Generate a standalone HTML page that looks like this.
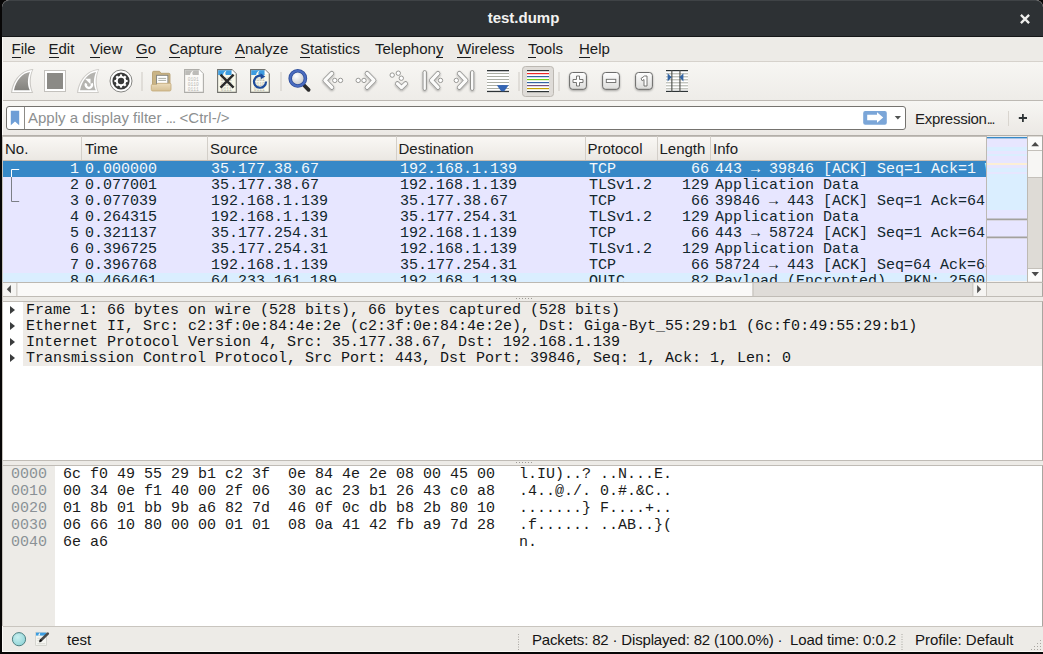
<!DOCTYPE html>
<html><head><meta charset="utf-8">
<style>
*{box-sizing:border-box;margin:0;padding:0}
html,body{width:1043px;height:654px;overflow:hidden;background:#070606;font-family:"Liberation Sans",sans-serif}
.a{position:absolute}
#win{position:absolute;left:2px;top:0;width:1041px;height:652px;background:#edebe7;overflow:hidden;border-radius:7px 7px 0 0}
#title{position:absolute;left:0;top:0;width:1041px;height:37px;background:#2d3134;border-radius:7px 7px 0 0;border-top:1px solid #3f4346;border-bottom:1px solid #151718}
#title .t{position:absolute;left:1px;width:1041px;top:8px;text-align:center;color:#f2f2f0;font-weight:bold;font-size:15px}
#title .x{position:absolute;left:1014px;top:10px}
#menu{position:absolute;left:0;top:37px;width:1041px;height:25px;background:#edebe7;border-bottom:1px solid #d6d2cc}
#menu span{position:absolute;top:3px;font-size:15px;color:#1a1c1d;white-space:nowrap}
#menu u{text-decoration:none;border-bottom:1px solid #1a1c1d;}
#tool{position:absolute;left:0;top:62px;width:1041px;height:39px;background:linear-gradient(#f7f6f3,#eeece8);border-bottom:1px solid #bdb9b3}
#tool svg{position:absolute}
.sep{position:absolute;width:1px;background:#d8d4ce;top:72px;height:18px}
#filt{position:absolute;left:0;top:101px;width:1041px;height:35px;background:linear-gradient(#f7f6f3,#ebe8e4)}
.mono{font-family:"Liberation Mono",monospace;font-size:15px}
#plist{position:absolute;left:0;top:135px;width:1041px;height:162px;background:#edebe7;border-top:1px solid #b3afa9;border-bottom:1px solid #c0bcb6;border-right:1px solid #a9a5a0}
#hdr{position:absolute;left:0;top:0;width:984px;height:25px;background:linear-gradient(#faf8f5,#ebe8e3);border-bottom:1px solid #c7bdb2;box-shadow:inset 0 1px 0 #c2beb8}
#hdr span{position:absolute;top:4px;font-size:15px;color:#1a1c1d}
#hdr i{position:absolute;top:0;width:1px;height:24px;background:#d3cfc9}
#rows{position:absolute;left:0;top:25px;width:984px;height:121px;overflow:hidden}
.r{position:absolute;left:0;width:984px;height:16px;background:#e7e6ff;color:#12272e;white-space:pre}
.r span{position:absolute;top:0px;line-height:17px}
.r.sel{background:#3688c7;color:#f4f8fb}
.r.q{background:#daeeff}
#details{position:absolute;left:0;top:301px;width:1041px;height:160px;background:#fff;border-top:1px solid #c0bcb6;border-bottom:1px solid #c0bcb6;border-right:1px solid #a9a5a0}
.d{position:absolute;left:21px;height:16px;background:#eeebe7;color:#111418;white-space:pre;width:1019px}
.d span{position:absolute;left:3px;top:0px;line-height:17px}
.tri{position:absolute;left:-13px;top:3.5px;width:0;height:0;border-left:5px solid #3a3c3d;border-top:4.7px solid transparent;border-bottom:4.7px solid transparent}
#hex{position:absolute;left:0;top:465px;width:1041px;height:162px;background:#fff;border-top:1px solid #c0bcb6;border-right:1px solid #a9a5a0}
#hexoff{position:absolute;left:0;top:0;width:53px;height:162px;background:#edebe7}
.h{position:absolute;white-space:pre;line-height:17px}
#status{position:absolute;left:0;top:626px;width:1041px;height:26px;background:#edebe7;border-top:1px solid #c9c5bf}
#status span{position:absolute;top:4px;font-size:15px;color:#141414;white-space:nowrap}
</style></head><body>
<div id="win">
  <div id="title"><div class="t">test.dump</div>
    <svg class="x" width="20" height="20" viewBox="0 0 20 20"><path d="M4.9 3.9L13.1 12.1M13.1 3.9L4.9 12.1" stroke="#eeeeec" stroke-width="2.3"/></svg>
  </div>
  <div id="menu">
    <span style="left:9.5px"><u>F</u>ile</span>
    <span style="left:46.5px"><u>E</u>dit</span>
    <span style="left:88px"><u>V</u>iew</span>
    <span style="left:134px"><u>G</u>o</span>
    <span style="left:167px"><u>C</u>apture</span>
    <span style="left:233px"><u>A</u>nalyze</span>
    <span style="left:298px"><u>S</u>tatistics</span>
    <span style="left:373px">Telephon<u>y</u></span>
    <span style="left:455px"><u>W</u>ireless</span>
    <span style="left:526px"><u>T</u>ools</span>
    <span style="left:577px"><u>H</u>elp</span>
  </div>
  <div id="tool">
<svg width="1043" height="39" viewBox="0 62 1043 39" style="position:absolute;left:-2px;top:0">
<defs>
<linearGradient id="gfin" x1="0" y1="0" x2="0" y2="1"><stop offset="0" stop-color="#a9a7a3"/><stop offset="1" stop-color="#83827e"/></linearGradient>
<linearGradient id="gtan" x1="0" y1="0" x2="0" y2="1"><stop offset="0" stop-color="#ecdcbc"/><stop offset="1" stop-color="#d5bf93"/></linearGradient>
<linearGradient id="gbtn" x1="0" y1="0" x2="0" y2="1"><stop offset="0" stop-color="#ffffff"/><stop offset="1" stop-color="#dcdcda"/></linearGradient>
<filter id="sh" x="-20%" y="-20%" width="140%" height="150%"><feGaussianBlur in="SourceAlpha" stdDeviation="0.8"/><feOffset dy="1.2"/><feComponentTransfer><feFuncA type="linear" slope="0.35"/></feComponentTransfer><feMerge><feMergeNode/><feMergeNode in="SourceGraphic"/></feMerge></filter>
</defs>
<!-- 1 start fin -->
<path d="M11,93 C12.5,80 21,69.8 33.4,69 C30,76 29.8,86 33.2,93 Z" fill="#c9c7c3"/>
<path d="M12.2,92 C14,80 22,71 32.2,70.1 C29,76.5 28.8,86 31.8,92 Z" fill="#ffffff"/>
<path d="M14,90.3 C16,80 22.5,73 30,72 C27.4,78 27.2,85 29.8,90.3 Z" fill="url(#gfin)"/>
<!-- 2 stop -->
<rect x="44.5" y="70.5" width="21" height="21" fill="#fff" stroke="#c3c1bd" stroke-width="1"/>
<rect x="47" y="73" width="16" height="16" fill="#8b8a86"/>
<!-- 3 restart fin -->
<path d="M77,93 C78.5,80 87,69.8 99.2,69 C96,76 95.8,86 99,93 Z" fill="#cfcdc9"/>
<path d="M78.2,92 C80,80 88,71 98.1,70.1 C95,76.5 94.8,86 97.8,92 Z" fill="#ffffff"/>
<path d="M80,90.3 C82,80 88.5,73 96,72 C93.4,78 93.2,85 95.8,90.3 Z" fill="#b5b4b0"/>
<path d="M86.1,83.4 A3.1,3.1 0 1 0 91.6,83.3" fill="none" stroke="#fff" stroke-width="2.5"/>
<path d="M85,78.8 L90.5,78.8 L90.5,84.3 Z" fill="#fff"/>
<!-- 4 gear -->
<circle cx="121" cy="81" r="11" fill="#fff" stroke="#858582" stroke-width="1"/>
<circle cx="121" cy="81" r="8.6" fill="#383939"/>
<g fill="#fff">
<circle cx="121" cy="81" r="5.3"/>
<g id="teeth"><rect x="119.9" y="74.4" width="2.2" height="2.5"/><rect x="119.9" y="85.1" width="2.2" height="2.5"/><rect x="114.4" y="79.9" width="2.5" height="2.2"/><rect x="125.1" y="79.9" width="2.5" height="2.2"/></g>
<use href="#teeth" transform="rotate(45 121 81)"/>
</g>
<circle cx="121" cy="81" r="3.2" fill="#383939"/>
<!-- sep -->
<rect x="141.5" y="72" width="1" height="19" fill="#cdc9c3"/>
<!-- 5 folder -->
<path d="M152.5,90 V72.5 Q152.5,71.3 153.7,71.3 H159.5 L161,73.3 H168.8 Q170,73.3 170,74.5 V90 Z" fill="#c9b486" stroke="#b39b6a" stroke-width="0.8"/>
<rect x="156.6" y="75.3" width="11.3" height="8.8" fill="#fff" stroke="#7d7f7c" stroke-width="0.9"/>
<rect x="158.3" y="77.9" width="7.8" height="0.9" fill="#a1a59c"/>
<rect x="158.3" y="79.9" width="7.8" height="0.9" fill="#a1a59c"/>
<path d="M151.3,89.5 V85.5 Q151.3,84.4 152.4,84.4 H156.5 L157.8,83.3 H169.8 Q171,83.3 171,84.5 V89.5 Q171,91 169.5,91 H152.8 Q151.3,91 151.3,89.5 Z" fill="url(#gtan)" stroke="#c3a979" stroke-width="0.8"/>
<!-- 6 file gray -->
<path d="M184.6,69.6 H199 L203.4,74 V92.4 H184.6 Z" fill="#fbfaf7" stroke="#aeada9" stroke-width="1.1"/>
<path d="M185.2,70.2 H198.8 V75 H185.2 Z" fill="#bdbcb8"/>
<path d="M190,75 Q190.5,71.5 193.5,70.5 Q191.5,73 192.8,75 Z" fill="#fbfaf7"/>
<path d="M199,69.8 V74 H203.2 Z" fill="#fff"/>
<g fill="#b9b8b4" font-family="Liberation Mono" font-size="4.6"><text x="187.8" y="81">0101</text><text x="187.8" y="86">0110</text><text x="187.8" y="91">0111</text></g>
<!-- 7 close file -->
<path d="M217.6,69.6 H231.8 L236.3,74 V92.4 H217.6 Z" fill="#f8f8ea" stroke="#72726e" stroke-width="1.1"/>
<path d="M218.2,70.2 H231.6 V75 H218.2 Z" fill="#3e9de0"/>
<path d="M223,75 Q223.5,71.5 226.5,70.5 Q224.5,73 225.8,75 Z" fill="#f8f8ea"/>
<path d="M231.9,69.8 V74 H236.1 Z" fill="#fff"/>
<g fill="#b5b5a9" font-family="Liberation Mono" font-size="4.6"><text x="220.8" y="81">0101</text><text x="220.8" y="86">0110</text><text x="220.8" y="91">0111</text></g>
<path d="M220.5,74.6 L233.6,87.7 M233.6,74.6 L220.5,87.7" stroke="#2b2b2b" stroke-width="2.4"/>
<!-- 8 reload -->
<path d="M250.6,69.6 H264.8 L269.3,74 V92.4 H250.6 Z" fill="#f8f8ea" stroke="#72726e" stroke-width="1.1"/>
<path d="M251.2,70.2 H264.6 V75 H251.2 Z" fill="#3e9de0"/>
<path d="M256,75 Q256.5,71.5 259.5,70.5 Q257.5,73 258.8,75 Z" fill="#f8f8ea"/>
<path d="M264.9,69.8 V74 H269.1 Z" fill="#fff"/>
<g fill="#b5b5a9" font-family="Liberation Mono" font-size="4.6"><text x="253.8" y="81">0101</text><text x="253.8" y="86">0110</text><text x="253.8" y="91">0111</text></g>
<path d="M262.5,76.3 A6,6 0 1 0 266,81.5" fill="none" stroke="#1e4d9b" stroke-width="2.2"/>
<path d="M260.5,73.2 L265.3,76.4 L260.8,79.2 Z" fill="#1e4d9b"/>
<!-- sep -->
<rect x="280.5" y="72" width="1" height="19" fill="#cdc9c3"/>
<!-- 9 magnifier -->
<defs><radialGradient id="gglass" cx="0.4" cy="0.35" r="0.65"><stop offset="0" stop-color="#ffffff"/><stop offset="1" stop-color="#c2c4c8"/></radialGradient></defs>
<path d="M303.8,85 L308.6,89.8" stroke="#2a2a2a" stroke-width="3.8" stroke-linecap="round"/>
<circle cx="297.8" cy="78.4" r="7.6" fill="url(#gglass)" stroke="#2d4c98" stroke-width="3.6"/>
<circle cx="297.8" cy="78.4" r="7.6" fill="none" stroke="#4a6cc0" stroke-width="2"/>
<!-- nav chevrons -->
<g fill="none" stroke-linecap="round" stroke-linejoin="round" filter="url(#sh)">
<path d="M331.8,73.4 L324.9,80.4 L331.8,87.4" stroke="#959593" stroke-width="4.8"/>
<path d="M331.8,73.4 L324.9,80.4 L331.8,87.4" stroke="#fbfbfa" stroke-width="3.2"/>
<path d="M367.1,73.4 L374,80.4 L367.1,87.4" stroke="#959593" stroke-width="4.8"/>
<path d="M367.1,73.4 L374,80.4 L367.1,87.4" stroke="#fbfbfa" stroke-width="3.2"/>
<path d="M397.4,83.6 L401.5,87.6 L405.6,83.6" stroke="#959593" stroke-width="4.8"/>
<path d="M397.4,83.6 L401.5,87.6 L405.6,83.6" stroke="#fbfbfa" stroke-width="3.2"/>
<path d="M438,73.4 L431.4,80.4 L438,87.4" stroke="#959593" stroke-width="4.8"/>
<path d="M438,73.4 L431.4,80.4 L438,87.4" stroke="#fbfbfa" stroke-width="3.2"/>
<path d="M424.7,72.3 V88.7" stroke="#8d8d8a" stroke-width="4.2"/>
<path d="M424.7,72.3 V88.7" stroke="#fafaf9" stroke-width="2.4"/>
<path d="M459.3,73.4 L466,80.4 L459.3,87.4" stroke="#959593" stroke-width="4.8"/>
<path d="M459.3,73.4 L466,80.4 L459.3,87.4" stroke="#fbfbfa" stroke-width="3.2"/>
<path d="M472.2,72.3 V88.7" stroke="#8d8d8a" stroke-width="4.2"/>
<path d="M472.2,72.3 V88.7" stroke="#fafaf9" stroke-width="2.4"/>
</g>
<g fill="#fff" stroke="#8d8d8a" stroke-width="0.9">
<circle cx="334.8" cy="80.4" r="2.2"/><circle cx="340.5" cy="80.4" r="2.2"/>
<circle cx="358.2" cy="80.4" r="2.2"/><circle cx="364" cy="80.4" r="2.2"/>
<circle cx="392.2" cy="75.1" r="2.2"/><circle cx="398.3" cy="73.2" r="2.2"/><circle cx="401.3" cy="78.2" r="2.2"/>
<circle cx="440.5" cy="80.4" r="2.2"/>
<circle cx="456.3" cy="80.4" r="2.2"/>
</g>
<!-- 15 autoscroll -->
<rect x="487" y="71" width="22" height="21" fill="#fff"/>
<g fill="#aaada3"><rect x="487" y="73" width="22" height="1"/><rect x="487" y="76" width="22" height="1"/><rect x="487" y="79" width="22" height="1"/><rect x="487" y="82" width="22" height="1"/><rect x="487" y="85" width="22" height="1"/><rect x="487" y="88" width="22" height="1"/></g>
<rect x="487" y="70" width="22" height="1.3" fill="#2e3436"/>
<rect x="487" y="90.8" width="22" height="1.3" fill="#2e3436"/>
<path d="M496.8,85.3 Q502.5,84.6 508.6,85.3 L504.2,91.2 H501.2 Z" fill="#3465b4"/>
<!-- sep -->
<rect x="518.5" y="72" width="1" height="19" fill="#cdc9c3"/>
<!-- 16 colorize pressed -->
<rect x="522.5" y="66.5" width="31" height="30" rx="3" fill="#dfdcd8" stroke="#bcb8b2" stroke-width="1"/>
<rect x="527" y="70" width="22" height="22" fill="#fff"/>
<rect x="527" y="70" width="22" height="1.2" fill="#2e3436"/>
<rect x="527" y="73" width="22" height="1.2" fill="#ef2929"/>
<rect x="527" y="76" width="22" height="1.2" fill="#3465a4"/>
<rect x="527" y="79" width="22" height="1.2" fill="#73d216"/>
<rect x="527" y="82" width="22" height="1.2" fill="#3465a4"/>
<rect x="527" y="85" width="22" height="1.2" fill="#75507b"/>
<rect x="527" y="88" width="22" height="1.2" fill="#c4a000"/>
<rect x="527" y="91" width="22" height="1.2" fill="#2e3436"/>
<!-- sep -->
<rect x="558.5" y="72" width="1" height="19" fill="#cdc9c3"/>
<!-- 17-19 zoom buttons -->
<g filter="url(#sh)">
<rect x="569.6" y="72.5" width="16.8" height="16.8" rx="3" fill="url(#gbtn)" stroke="#5e5e5c" stroke-width="0.9"/>
<rect x="602.6" y="72.5" width="16.8" height="16.8" rx="3" fill="url(#gbtn)" stroke="#5e5e5c" stroke-width="0.9"/>
<rect x="635.6" y="72.5" width="16.8" height="16.8" rx="3" fill="url(#gbtn)" stroke="#5e5e5c" stroke-width="0.9"/>
</g>
<path d="M576.5,76 H579.5 V79.5 H583 V82.5 H579.5 V86 H576.5 V82.5 H573 V79.5 H576.5 Z" fill="#fff" stroke="#6a6a68" stroke-width="0.9"/>
<rect x="606.3" y="79.3" width="9.5" height="3.2" fill="#fff" stroke="#6a6a68" stroke-width="0.9"/>
<path d="M641,78.5 L644.5,76 H647 V86 H644 V79.5 L642.2,80.8 Z" fill="#fff" stroke="#6a6a68" stroke-width="0.9"/>
<!-- 20 resize columns -->
<rect x="666" y="71" width="22" height="20.5" fill="#fff"/>
<g fill="#aaada3"><rect x="666" y="73.3" width="22" height="1"/><rect x="666" y="76.3" width="22" height="1"/><rect x="666" y="79.3" width="22" height="1"/><rect x="666" y="82.3" width="22" height="1"/><rect x="666" y="85.3" width="22" height="1"/><rect x="666" y="88.3" width="22" height="1"/></g>
<rect x="666" y="70" width="22" height="1.2" fill="#2e3436"/>
<rect x="666" y="90.8" width="22" height="1.2" fill="#2e3436"/>
<rect x="671.3" y="70" width="1.1" height="22" fill="#4c4f4a"/>
<rect x="679.4" y="70" width="1.1" height="22" fill="#4c4f4a"/>
<path d="M667.6,73.2 L671.6,77.3 L667.6,81.4 Z" fill="#3465a4"/>
<path d="M683.4,73.2 L679.4,77.3 L683.4,81.4 Z" fill="#3465a4"/>
</svg>
</div>
  <div id="filt">
  <div class="a" style="left:4px;top:5px;width:900px;height:24px;background:#fff;border:1px solid #75736f;border-radius:3px"></div>
  <div class="a" style="left:22px;top:6px;width:1px;height:22px;background:#8d8b87"></div>
  <svg class="a" style="left:0;top:0" width="1041" height="35" viewBox="2 101 1041 35">
    <path d="M10.8,110.8 H19.2 V125.3 L15,121.6 L10.8,125.3 Z" fill="#6e9ed6"/>
    <rect x="863.2" y="111.1" width="23.6" height="13.6" rx="2" fill="#7ba6d8"/>
    <path d="M867.2,114.7 H877 V112.2 L883.2,117.5 L877,122.8 V120.3 H867.2 Z" fill="#fff"/>
    <path d="M894.7,116.1 H901 L897.85,119.4 Z" fill="#505352"/>
    <rect x="1008" y="111" width="1" height="15" fill="#d9d5cf"/>
    <path d="M1018.8,118 H1027 M1022.9,113.9 V122.1" stroke="#2e3436" stroke-width="1.8"/>
  </svg>
  <span class="a" style="left:26px;top:8px;font-size:15px;color:#8c8f90;white-space:nowrap">Apply a display filter <span style="letter-spacing:-0.9px">...</span> &lt;Ctrl-/&gt;</span>
  <span class="a" style="left:913px;top:9px;font-size:15px;color:#1e1e1e;white-space:nowrap"><span style="letter-spacing:-0.25px">Expression</span><span style="letter-spacing:-1.5px;font-size:14px">...</span></span>
</div>
  <div id="plist">
    <div id="hdr">
      <span style="left:3px">No.</span><i style="left:79px"></i>
      <span style="left:83px">Time</span><i style="left:205px"></i>
      <span style="left:208px">Source</span><i style="left:394px"></i>
      <span style="left:396.5px">Destination</span><i style="left:583px"></i>
      <span style="left:585.5px">Protocol</span><i style="left:655px"></i>
      <span style="left:657.5px">Length</span><i style="left:708px"></i>
      <span style="left:711px">Info</span>
    </div>
    <svg class="a" style="left:0;top:0" width="1041" height="161" viewBox="2 136 1041 161">
<rect x="987" y="137" width="40" height="1.6" fill="#3688c7"/>
<rect x="987" y="138.6" width="40" height="8.4" fill="#e7e6ff"/>
<rect x="987" y="147" width="40" height="4.0" fill="#daeeff"/>
<rect x="987" y="151" width="40" height="3.0" fill="#e7e6ff"/>
<rect x="987" y="154" width="40" height="2.0" fill="#daeeff"/>
<rect x="987" y="156" width="40" height="7.0" fill="#e7e6ff"/>
<rect x="987" y="163" width="40" height="2.0" fill="#fcefd6"/>
<rect x="987" y="165" width="40" height="3.0" fill="#e7e6ff"/>
<rect x="987" y="168" width="40" height="4.0" fill="#daeeff"/>
<rect x="987" y="172" width="40" height="2.0" fill="#e7e6ff"/>
<rect x="987" y="174" width="40" height="36.0" fill="#daeeff"/>
<rect x="987" y="210" width="40" height="9.0" fill="#e7e6ff"/>
<rect x="987" y="218.5" width="40" height="2" fill="#a3a19d"/>
<rect x="987" y="220.5" width="40" height="16.5" fill="#e7e6ff"/>
<rect x="987" y="236.5" width="40" height="2" fill="#a3a19d"/>
<rect x="987" y="238.5" width="40" height="36.5" fill="#e7e6ff"/>
<rect x="987" y="275" width="40" height="6.0" fill="#daeeff"/>
<rect x="986" y="136" width="1" height="146" fill="#bdb9b3"/>
<rect x="1027" y="136" width="1" height="146" fill="#bdb9b3"/>
<rect x="987" y="281" width="40" height="1" fill="#f4f3f1"/>
<!-- vscroll -->
<rect x="1028" y="136" width="14" height="146" fill="#dedbd6"/>
<rect x="1028" y="137" width="14" height="13" fill="#fbfbfa"/>
<rect x="1028" y="150" width="14" height="1" fill="#c4c0ba"/>
<rect x="1028" y="151" width="14" height="26" fill="#f7f6f4"/>
<rect x="1028" y="177" width="14" height="1" fill="#c4c0ba"/>
<rect x="1028" y="268" width="14" height="1" fill="#c4c0ba"/>
<rect x="1028" y="269" width="14" height="12.5" fill="#fbfbfa"/>
<path d="M1031.3,146.2 L1035.2,142 L1039.1,146.2 Z" fill="#4a4a4a"/>
<path d="M1031.5,272 L1039,272 L1035.25,276.2 Z" fill="#4a4a4a"/>
<!-- hscroll -->
<rect x="2" y="282" width="1041" height="1" fill="#bcb8b2"/>
<rect x="2" y="283" width="984" height="13" fill="#dfdcd8"/>
<rect x="2" y="283" width="14.5" height="13" fill="#f6f5f3"/>
<rect x="16.5" y="283" width="1" height="13" fill="#c2beb8"/>
<rect x="17.5" y="283" width="735" height="13" fill="#faf9f8"/>
<rect x="752.5" y="283" width="1" height="13" fill="#c2beb8"/>
<rect x="972.5" y="283" width="1" height="13" fill="#c2beb8"/>
<rect x="973.5" y="283" width="12.5" height="13" fill="#f6f5f3"/>
<rect x="986" y="283" width="1" height="13" fill="#c9c5bf"/>
<rect x="987" y="283" width="55" height="13" fill="#edebe7"/>
<path d="M6.8,289.2 L10.9,285.1 L10.9,293.3 Z" fill="#4f4f4f"/>
<path d="M981.2,289.2 L977.1,285.1 L977.1,293.3 Z" fill="#4f4f4f"/>
</svg>
<div id="rows" class="mono">
<div class="r sel" style="top:0px"><span style="right:907px">1</span><span style="left:83px">0.000000</span><span style="left:209px">35.177.38.67</span><span style="left:398px">192.168.1.139</span><span style="left:587px">TCP</span><span style="right:277px">66</span><span style="left:713px">443 → 39846 [ACK] Seq=1 Ack=1 Win=1234 Len=0</span></div>
<div class="r" style="top:16px"><span style="right:907px">2</span><span style="left:83px">0.077001</span><span style="left:209px">35.177.38.67</span><span style="left:398px">192.168.1.139</span><span style="left:587px">TLSv1.2</span><span style="right:277px">129</span><span style="left:713px">Application Data</span></div>
<div class="r" style="top:32px"><span style="right:907px">3</span><span style="left:83px">0.077039</span><span style="left:209px">192.168.1.139</span><span style="left:398px">35.177.38.67</span><span style="left:587px">TCP</span><span style="right:277px">66</span><span style="left:713px">39846 → 443 [ACK] Seq=1 Ack=64 Win=1234 Len=0</span></div>
<div class="r" style="top:48px"><span style="right:907px">4</span><span style="left:83px">0.264315</span><span style="left:209px">192.168.1.139</span><span style="left:398px">35.177.254.31</span><span style="left:587px">TLSv1.2</span><span style="right:277px">129</span><span style="left:713px">Application Data</span></div>
<div class="r" style="top:64px"><span style="right:907px">5</span><span style="left:83px">0.321137</span><span style="left:209px">35.177.254.31</span><span style="left:398px">192.168.1.139</span><span style="left:587px">TCP</span><span style="right:277px">66</span><span style="left:713px">443 → 58724 [ACK] Seq=1 Ack=64 Win=1234 Len=0</span></div>
<div class="r" style="top:80px"><span style="right:907px">6</span><span style="left:83px">0.396725</span><span style="left:209px">35.177.254.31</span><span style="left:398px">192.168.1.139</span><span style="left:587px">TLSv1.2</span><span style="right:277px">129</span><span style="left:713px">Application Data</span></div>
<div class="r" style="top:96px"><span style="right:907px">7</span><span style="left:83px">0.396768</span><span style="left:209px">192.168.1.139</span><span style="left:398px">35.177.254.31</span><span style="left:587px">TCP</span><span style="right:277px">66</span><span style="left:713px">58724 → 443 [ACK] Seq=64 Ack=64 Win=1234 Len=0</span></div>
<div class="r q" style="top:112px"><span style="right:907px">8</span><span style="left:83px">0.466461</span><span style="left:209px">64.233.161.189</span><span style="left:398px">192.168.1.139</span><span style="left:587px">QUIC</span><span style="right:277px">82</span><span style="left:713px">Payload (Encrypted), PKN: 2560</span></div>
<svg class="a" style="left:0;top:0" width="40" height="121" viewBox="2 161 40 121"><path d="M19.2,169.5 H11.5 V177" stroke="#fff" stroke-width="1" fill="none"/><path d="M11.5,177 V201.5 H19.2" stroke="#7c7f86" stroke-width="1" fill="none"/></svg>
</div>
  </div>
  <div id="details" class="mono">
<div class="d" style="top:0px"><i class="tri"></i><span>Frame 1: 66 bytes on wire (528 bits), 66 bytes captured (528 bits)</span></div>
<div class="d" style="top:16px"><i class="tri"></i><span>Ethernet II, Src: c2:3f:0e:84:4e:2e (c2:3f:0e:84:4e:2e), Dst: Giga-Byt_55:29:b1 (6c:f0:49:55:29:b1)</span></div>
<div class="d" style="top:32px"><i class="tri"></i><span>Internet Protocol Version 4, Src: 35.177.38.67, Dst: 192.168.1.139</span></div>
<div class="d" style="top:48px"><i class="tri"></i><span>Transmission Control Protocol, Src Port: 443, Dst Port: 39846, Seq: 1, Ack: 1, Len: 0</span></div>
</div>
  <div id="hex" class="mono">
<div id="hexoff"><div class="h" style="left:9px;top:0px;color:#8a9196">0000
0010
0020
0030
0040</div></div>
<div class="h" style="left:61px;top:0px;color:#1a1a1a">6c f0 49 55 29 b1 c2 3f  0e 84 4e 2e 08 00 45 00
00 34 0e f1 40 00 2f 06  30 ac 23 b1 26 43 c0 a8
01 8b 01 bb 9b a6 82 7d  46 0f 0c db b8 2b 80 10
06 66 10 80 00 00 01 01  08 0a 41 42 fb a9 7d 28
6e a6</div>
<div class="h" style="left:517px;top:0px;color:#1a1a1a">l.IU)..? ..N...E.
.4..@./. 0.#.&amp;C..
.......} F....+..
.f...... ..AB..}(
n.</div>
</div>
  <svg class="a" style="left:0;top:0" width="1041" height="652" viewBox="2 0 1041 652">
<g fill="#9d9a95"><rect x="516" y="298" width="1" height="1"/><rect x="519" y="298" width="1" height="1"/><rect x="522" y="298" width="1" height="1"/><rect x="525" y="298" width="1" height="1"/><rect x="528" y="298" width="1" height="1"/><rect x="531" y="298" width="1" height="1"/>
<rect x="516" y="462" width="1" height="1"/><rect x="519" y="462" width="1" height="1"/><rect x="522" y="462" width="1" height="1"/><rect x="525" y="462" width="1" height="1"/><rect x="528" y="462" width="1" height="1"/><rect x="531" y="462" width="1" height="1"/></g></svg>
  <div id="status">
    <svg class="a" style="left:0;top:0" width="1041" height="26" viewBox="2 626 1041 26">
      <defs><radialGradient id="gcy" cx="0.4" cy="0.35" r="0.7"><stop offset="0" stop-color="#c9f0f0"/><stop offset="1" stop-color="#8fd3d6"/></radialGradient></defs>
      <circle cx="19" cy="638.2" r="6.6" fill="url(#gcy)" stroke="#4f7f81" stroke-width="1"/>
      <g transform="translate(0,-0.8)"><rect x="35.7" y="632.1" width="10.9" height="13.2" fill="#f6f6f2" stroke="#c9c9c3" stroke-width="0.7"/>
      <rect x="36" y="632.4" width="10.3" height="3" fill="#3d9de0"/>
      <path d="M38,635.4 Q38.8,633.2 40.2,632.6 Q39.6,634.3 40.3,635.4 Z" fill="#f6f6f2"/>
      <g fill="#cfcfc8"><rect x="37.3" y="637.6" width="3" height="0.8"/><rect x="37.3" y="640.2" width="2" height="0.8"/><rect x="37.3" y="643.2" width="8" height="0.8"/></g>
      <path d="M40.4,640.6 L47.8,633.4" stroke="#4a4a4a" stroke-width="2.6" stroke-linecap="round"/>
      <path d="M39,642.2 L40.6,638.9 L42.2,640.5 Z" fill="#111"/>
      </g>
      <g fill="#a9a6a1"><rect x="518" y="633" width="1" height="1"/><rect x="518" y="635.5" width="1" height="1"/><rect x="518" y="638" width="1" height="1"/><rect x="518" y="640.5" width="1" height="1"/><rect x="518" y="643" width="1" height="1"/><rect x="518" y="645.5" width="1" height="1"/><rect x="518" y="648" width="1" height="1"/>
      <rect x="901.5" y="633" width="1" height="1"/><rect x="901.5" y="635.5" width="1" height="1"/><rect x="901.5" y="638" width="1" height="1"/><rect x="901.5" y="640.5" width="1" height="1"/><rect x="901.5" y="643" width="1" height="1"/><rect x="901.5" y="645.5" width="1" height="1"/><rect x="901.5" y="648" width="1" height="1"/>
      <rect x="1040" y="639" width="1" height="1"/><rect x="1037" y="642" width="1" height="1"/><rect x="1040" y="642" width="1" height="1"/><rect x="1034" y="645" width="1" height="1"/><rect x="1037" y="645" width="1" height="1"/><rect x="1040" y="645" width="1" height="1"/><rect x="1031" y="648" width="1" height="1"/><rect x="1034" y="648" width="1" height="1"/><rect x="1037" y="648" width="1" height="1"/><rect x="1040" y="648" width="1" height="1"/></g>
    </svg>
    <span style="left:65px">test</span>
    <span style="left:530px;letter-spacing:-0.17px">Packets: 82 · Displayed: 82 (100.0%) ·</span>
    <span style="left:788px;letter-spacing:-0.1px">Load time: 0:0.2</span>
    <span style="left:913px">Profile: Default</span>
  </div>
<div class="a" style="left:0;top:37px;width:1px;height:98px;background:#fbf9f5"></div>
<div class="a" style="left:0;top:135px;width:1px;height:491px;background:#c6c2bc"></div>
<div class="a" style="left:0;top:626px;width:1px;height:26px;background:#fbf9f5"></div>
<div class="a" style="left:0;top:651px;width:1041px;height:1px;background:#fbf9f5"></div>
</div>
</body></html>
